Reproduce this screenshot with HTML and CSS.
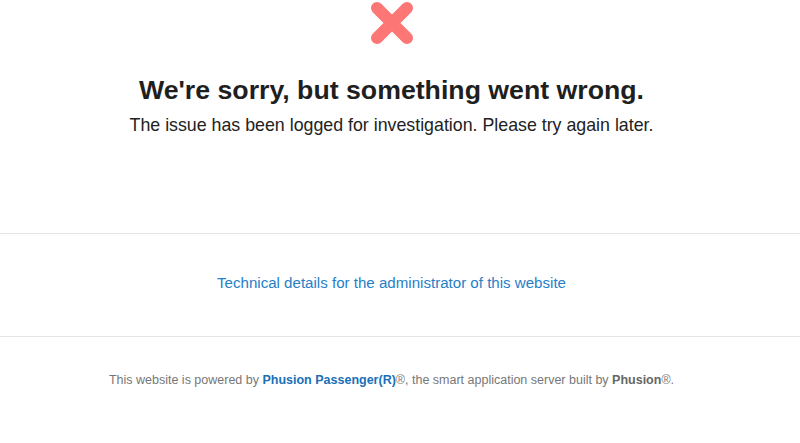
FILE: index.html
```html
<!DOCTYPE html>
<html>
<head>
<meta charset="utf-8">
<link rel="stylesheet" href="styles.css">
</head>
<body>
<div class="top">
  <svg class="icon" width="46" height="46" viewBox="0 0 46 46" aria-hidden="true">
    <path d="M8 8 L38 38 M38 8 L8 38" stroke="#fd7676" stroke-width="12" stroke-linecap="round"/>
  </svg>
  <h1 class="title">We're sorry, but something went wrong.</h1>
  <p class="lead">The issue has been logged for investigation. Please try again later.</p>
</div>
<div class="tech">
  <a class="tech-link" href="#">Technical details for the administrator of this website</a>
</div>
<div class="footer">
  This website is powered by <a class="brand" href="#">Phusion Passenger(R)</a>®, the smart application server built by <b class="phusion">Phusion</b>®.
</div>
</body>
</html>
```
FILE: styles.css
```css
html, body { margin: 0; padding: 0; background: #fff; }
body { font-family: "Liberation Sans", Arial, sans-serif; color: #222; }
.top { display: flex; flex-direction: column; align-items: center; padding: 0 17px 0 0; height: 234px; box-sizing: border-box; border-bottom: 1px solid #e5e5e5; }
.icon { display: block; }
.title { margin: 28px 0 0; font-size: 26.7px; line-height: 32px; font-weight: bold; color: #1f1f1f; }
.lead { margin: 7px 0 0; font-size: 17.8px; line-height: 24px; color: #222; }
.tech { height: 102px; display: flex; align-items: center; justify-content: center; padding-right: 17px; border-bottom: 1px solid #e5e5e5; }
.tech-link { font-size: 15.1px; color: #2680c8; text-decoration: none; margin-top: -5px; }
.footer { text-align: center; font-size: 12.5px; color: #777; padding: 36px 17px 0 0; }
.brand { color: #1a6fb8; font-weight: bold; text-decoration: none; }
.phusion { color: #666; }
```
